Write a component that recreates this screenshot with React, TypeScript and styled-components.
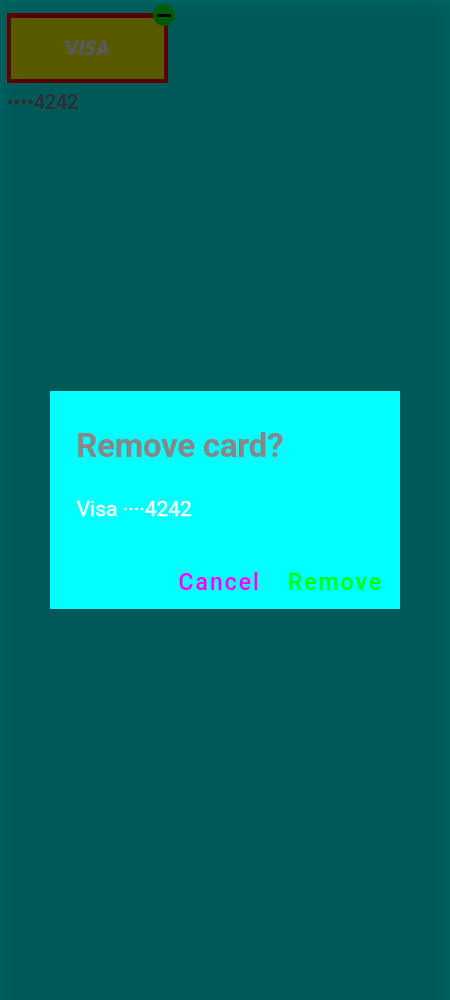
import React from 'react';
import styled, { createGlobalStyle } from 'styled-components';

const GlobalStyle = createGlobalStyle`
  * { box-sizing: border-box; }
  body { margin: 0; background: #00ffff; font-family: Roboto, sans-serif; }
`;

const Screen = styled.main`
  height: 1000px;
  padding: 13px 7px;
  overflow: hidden;
`;

const PaymentMethod = styled.div`
  width: 161px;
`;

const CardFace = styled.div`
  position: relative;
  display: flex;
  align-items: center;
  justify-content: center;
  height: 70px;
  padding: 0 4px 1px 0;
  background: #ffff00;
  border: 4px solid #ff0000;
  border-width: 5px 4px 4px;
`;

const RemoveBadge = styled.span`
  position: absolute;
  top: -14px;
  right: -11px;
  display: flex;
  align-items: center;
  justify-content: center;
  width: 22px;
  height: 22px;
  border-radius: 50%;
  background: #00ff00;
`;

const Minus = styled.span`
  width: 14px;
  height: 3px;
  border-radius: 1px;
  background: #000;
`;

const CardNumber = styled.div`
  margin-top: 7px;
  font-size: 20px;
  line-height: 24px;
  font-weight: 500;
  letter-spacing: -0.25px;
  color: #888;
`;

const Scrim = styled.div`
  position: fixed;
  inset: 0;
  display: flex;
  align-items: center;
  justify-content: center;
  background: rgba(0, 0, 0, 0.65);
`;

const EdgeGlow = styled.div`
  position: fixed;
  inset: 0 0 -30px;
  box-shadow: inset 0 2px 18px rgba(0, 130, 118, 0.35);
`;

const Dialog = styled.section`
  position: relative;
  width: 350px;
  height: 218px;
  padding: 35px 16.5px 0 26.5px;
  background: #00ffff;
`;

const Title = styled.h1`
  margin: 0;
  font-size: 33px;
  line-height: 40px;
  font-weight: 700;
  letter-spacing: -0.25px;
  color: #888;
`;

const Message = styled.p`
  margin: 30px 0 0;
  font-size: 21px;
  line-height: 26px;
  color: #fff;
  -webkit-text-stroke: 0.3px #fff;
`;

const Actions = styled.div`
  display: flex;
  justify-content: flex-end;
  gap: 27px;
  margin-top: 47px;
`;

const Action = styled.button<{ $color: string }>`
  padding: 0;
  border: 0;
  background: none;
  font: 500 23px/28px Roboto, sans-serif;
  letter-spacing: 2px;
  color: ${(p) => p.$color};
`;

const VisaLogo = () => (
  <svg width="47" height="16" viewBox="0 0 46 16" preserveAspectRatio="none" fill="#fff" aria-label="Visa">
    <path d="M0 .5H6.4Q7.8.5 8.1 1.8L9.7 10.2 13.6.5H17.5L11.5 15H7.1L4.4 3.5Q4.3 2.8 3.7 2.5 2.3 1.4 0 1Z" />
    <path d="M19 .5H22.7L19.8 15H16.1Z" />
    <path d="M33.9.9 33.4 3.9Q31.8 3.1 30 3.1C28.4 3.1 27.5 3.7 27.5 4.5 27.5 6.1 32.4 6.3 32.4 10.1 32.4 13.4 29.5 15.3 25.7 15.3 24 15.3 22.3 14.9 21.4 14.5L21.9 11.4Q23.8 12.4 25.7 12.4C27.2 12.4 28.3 11.8 28.3 10.8 28.3 9.1 23.6 8.7 23.6 5.1 23.6 2.2 26.4.2 30 .2 31.6.2 33 .5 33.9.9Z" />
    <path fillRule="evenodd" d="M42.8.5 46 15H42.6L42.2 12.9H37.5L36.7 15H32.9L38.4 2Q39 .5 40.6.5ZM40.5 4.7 38.6 10H41.6Z" />
  </svg>
);

export default function App() {
  return (
    <>
      <GlobalStyle />
      <Screen>
        <PaymentMethod>
          <CardFace>
            <VisaLogo />
            <RemoveBadge><Minus /></RemoveBadge>
          </CardFace>
          <CardNumber>••••4242</CardNumber>
        </PaymentMethod>
      </Screen>
      <Scrim>
        <EdgeGlow />
        <Dialog role="dialog">
          <Title>Remove card?</Title>
          <Message>Visa ····4242</Message>
          <Actions>
            <Action $color="#ff00ff">Cancel</Action>
            <Action $color="#00ff00">Remove</Action>
          </Actions>
        </Dialog>
      </Scrim>
    </>
  );
}
